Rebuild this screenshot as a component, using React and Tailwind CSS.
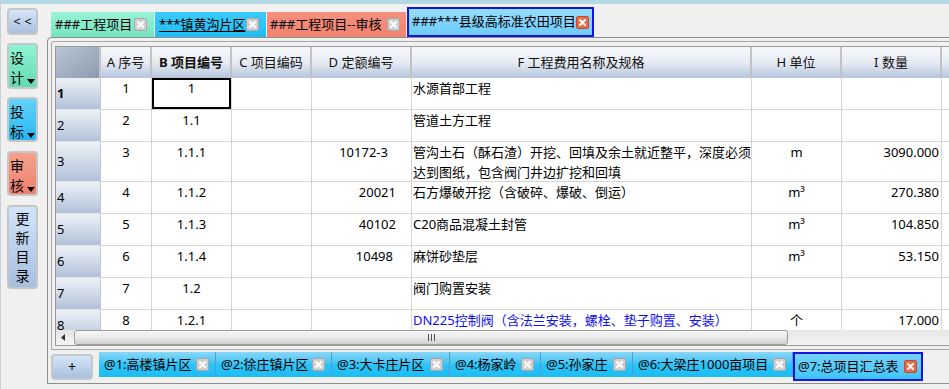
import React from "react";

const Close = ({ active }) => (
  <svg width="13" height="13" viewBox="0 0 13 13" className="shrink-0">
    <rect x="0.5" y="0.5" width="12" height="12" rx="1.5" fill={active ? "#ea6a4a" : "#d0d0d0"} stroke={active ? "#c2482e" : "#a6a6a6"} />
    <path d="M4 4 L9 9 M9 4 L4 9" stroke="#fff" strokeWidth="2" strokeLinecap="round" />
  </svg>
);

const Tri = () => (
  <svg width="8" height="5" viewBox="0 0 8 5" className="shrink-0 mb-[4px]">
    <polygon points="0,0 8,0 4,5" fill="#000" />
  </svg>
);

function Sidebar() {
  return (
    <div className="w-[45px] shrink-0 pl-[6px] pt-[4px] flex flex-col">
      <div className="w-[31px] h-[27px] rounded-[4px] border-2 border-[#c4c6c8] bg-gradient-to-b from-[#d6e5f8] to-[#a9c0df] flex items-center justify-center text-[13px] leading-none">
        &lt; &lt;
      </div>
      <div className="mt-[8px] w-[31px] h-[46px] rounded-[4px] border-2 border-[#c4c6c8] bg-gradient-to-b from-[#8ff5d4] to-[#64d9b2] pt-[3px] pl-[1px] pr-[1px] text-[14px] leading-[20px]">
        <div>设</div>
        <div className="flex items-end justify-between">计<Tri /></div>
      </div>
      <div className="mt-[8px] w-[31px] h-[45px] rounded-[4px] border-2 border-[#c4c6c8] bg-gradient-to-b from-[#62d2fa] to-[#1fb7f2] pt-[3px] pl-[1px] pr-[1px] text-[14px] leading-[20px]">
        <div>投</div>
        <div className="flex items-end justify-between">标<Tri /></div>
      </div>
      <div className="mt-[9px] w-[31px] h-[45px] rounded-[4px] border-2 border-[#c4c6c8] bg-gradient-to-b from-[#f4a28a] to-[#f07e6e] pt-[3px] pl-[1px] pr-[1px] text-[14px] leading-[20px]">
        <div>审</div>
        <div className="flex items-end justify-between">核<Tri /></div>
      </div>
      <div className="mt-[9px] w-[31px] h-[84px] rounded-[4px] border-2 border-[#c4c6c8] bg-gradient-to-b from-[#d2e4fb] to-[#a6bedd] pt-[2px] flex flex-col items-center text-[14px] leading-[19px]">
        <div>更</div>
        <div>新</div>
        <div>目</div>
        <div>录</div>
      </div>
    </div>
  );
}

function TopTabs() {
  return (
    <div className="h-[33px] shrink-0 flex items-end pl-[5px] gap-[1px]">
      <div className="w-[103px] h-[25px] flex items-center justify-between pl-[4px] pr-[7px] bg-gradient-to-b from-[#97f4d6] to-[#76e3bf] whitespace-nowrap">
        <span>###工程项目</span>
        <Close />
      </div>
      <div className="w-[111px] h-[25px] flex items-center justify-between pl-[4px] pr-[7px] bg-gradient-to-b from-[#3ccaf8] to-[#19bef5] whitespace-nowrap">
        <span className="underline underline-offset-2">***镇黄沟片区</span>
        <Close />
      </div>
      <div className="w-[139px] h-[25px] flex items-center justify-between pl-[3px] pr-[6px] bg-gradient-to-b from-[#f6907f] to-[#f2836f] whitespace-nowrap">
        <span>###工程项目--审核</span>
        <Close />
      </div>
      <div className="w-[187px] h-[30px] flex items-center justify-between pl-[3px] pr-[5px] border-2 border-[#1414e4] bg-gradient-to-b from-[#96ddff] to-[#6ccbfb] whitespace-nowrap">
        <span>###***县级高标准农田项目</span>
        <Close active />
      </div>
    </div>
  );
}

function HeadCell({ w, bold, children }) {
  return (
    <div className={`${w} shrink-0 flex items-center justify-center border-r-2 border-[#c2c2c2] bg-gradient-to-b from-[#f6f8fb] via-[#e6ebf3] to-[#b5c5dd] text-[#111] whitespace-nowrap ${bold ? "font-bold" : ""}`}>
      {children}
    </div>
  );
}

const rows = [
  { n: "1", a: "1", b: "1", d: "", dp: "", f: "水源首部工程", h: "", i: "", sel: true },
  { n: "2", a: "2", b: "1.1", d: "", dp: "", f: "管道土方工程", h: "", i: "" },
  {
    n: "3", a: "3", b: "1.1.1", d: "10172-3", dp: "pr-[23px]",
    f: (
      <>
        管沟土石（酥石渣）开挖、回填及余土就近整平，深度必须
        <br />
        达到图纸，包含阀门井边扩挖和回填
      </>
    ),
    h: "m", i: "3090.000", tall: true,
  },
  { n: "4", a: "4", b: "1.1.2", d: "20021", dp: "pr-[15px]", f: "石方爆破开挖（含破碎、爆破、倒运）", h: "m³", i: "270.380" },
  { n: "5", a: "5", b: "1.1.3", d: "40102", dp: "pr-[15px]", f: "C20商品混凝土封管", h: "m³", i: "104.850" },
  { n: "6", a: "6", b: "1.1.4", d: "10498", dp: "pr-[18px]", f: "麻饼砂垫层", h: "m³", i: "53.150" },
  { n: "7", a: "7", b: "1.2", d: "", dp: "", f: "阀门购置安装", h: "", i: "" },
  { n: "8", a: "8", b: "1.2.1", d: "", dp: "", f: "DN225控制阀（含法兰安装，螺栓、垫子购置、安装）", blue: true, h: "个", i: "17.000" },
];

const cell = "shrink-0 border-r border-b border-[#d6d6d6] bg-white leading-[20px] whitespace-nowrap overflow-hidden";

function Grid() {
  return (
    <div className="h-[300px] border border-[#9a9a9a] flex flex-col overflow-hidden bg-white">
      <div className="h-[283px] shrink-0 overflow-hidden flex flex-col">
        <div className="flex h-[31px] shrink-0">
          <div className="w-[45px] shrink-0 bg-gradient-to-br from-[#bac6d6] to-[#8c9bb0] border-r-2 border-[#c4c4c4]" />
          <HeadCell w="w-[51px]">A 序号</HeadCell>
          <HeadCell w="w-[80px]" bold>B 项目编号</HeadCell>
          <HeadCell w="w-[80px]">C 项目编码</HeadCell>
          <HeadCell w="w-[100px]">D 定额编号</HeadCell>
          <HeadCell w="w-[340px]">F 工程费用名称及规格</HeadCell>
          <HeadCell w="w-[90px]">H 单位</HeadCell>
          <HeadCell w="w-[100px]">I 数量</HeadCell>
          <HeadCell w="w-[100px]"></HeadCell>
        </div>
        {rows.map((r) => (
          <div key={r.n} className={`flex shrink-0 ${r.tall ? "h-[40px]" : "h-[32px]"}`}>
            <div className={`w-[45px] shrink-0 flex items-center pl-[1px] border-r border-b border-r-[#c6c6c6] border-b-[#dde2ea] bg-gradient-to-b from-[#eef1f6] to-[#b2c2da] ${r.sel ? "font-bold" : ""}`}>
              {r.n}
            </div>
            <div className={`${cell} w-[51px] text-center`}>{r.a}</div>
            <div className={`${cell} w-[80px] text-center relative`}>
              {r.b}
              {r.sel && <div className="absolute inset-0 border-2 border-black" />}
            </div>
            <div className={`${cell} w-[80px]`}></div>
            <div className={`${cell} w-[100px] text-right ${r.dp}`}>{r.d}</div>
            <div className={`${cell} w-[340px] pl-[1px] ${r.blue ? "text-[#1010f0]" : ""}`}>{r.f}</div>
            <div className={`${cell} w-[90px] text-center`}>{r.h}</div>
            <div className={`${cell} w-[100px] text-right pr-[2px]`}>{r.i}</div>
            <div className={`${cell} w-[100px]`}></div>
          </div>
        ))}
      </div>
      <div className="h-[15px] shrink-0 flex items-center bg-gradient-to-b from-[#e6e6e6] to-[#f4f4f4]">
        <div className="w-[18px] h-full flex items-center justify-center pr-[4px]">
          <svg width="4" height="7" viewBox="0 0 4 7">
            <polygon points="4,0 4,7 0,3.5" fill="#333" />
          </svg>
        </div>
        <div className="w-[714px] h-[15px] shrink-0 rounded-[3px] border border-[#9c9c9c] bg-gradient-to-b from-[#f8f8f8] via-[#e9e9e9] to-[#d0d0d0] flex items-center justify-center gap-[2px]">
          <div className="w-[1px] h-[7px] bg-[#555]" />
          <div className="w-[1px] h-[7px] bg-[#555]" />
          <div className="w-[1px] h-[7px] bg-[#555]" />
        </div>
      </div>
    </div>
  );
}

function BottomTab({ w, label, active }) {
  if (active) {
    return (
      <div className={`${w} h-[29px] shrink-0 flex items-center justify-between pl-[3px] pr-[4px] border-2 border-[#1414e4] bg-gradient-to-b from-[#72d3fa] to-[#3cc5f8] whitespace-nowrap`}>
        <span>{label}</span>
        <Close active />
      </div>
    );
  }
  return (
    <div className={`${w} h-[25px] shrink-0 flex items-center justify-between pl-[5px] pr-[6px] border-r border-[#4e9fca] bg-gradient-to-b from-[#88d7f8] via-[#2dc3f6] to-[#17bdf5] whitespace-nowrap`}>
      <span>{label}</span>
      <Close />
    </div>
  );
}

function Panel() {
  return (
    <div className="ml-[1px] w-[920px] h-[347px] border border-[#8e8e8e] rounded-tl-[4px] px-[3px] pt-[3px] flex flex-col bg-[#f0f0f0]">
      <div className="border border-[#a8a8a8] rounded-tl-[3px] pt-[4px] px-[3px] pb-[3px]">
        <Grid />
      </div>
      <div className="h-[32px] shrink-0 pt-[2px] flex items-start">
        <div className="w-[42px] h-[26px] mt-[2px] shrink-0 rounded-[4px] border-2 border-[#c6c9cc] bg-gradient-to-b from-[#d6e6f9] to-[#a9bfdd] flex items-center justify-center text-[14px] leading-none">
          +
        </div>
        <div className="ml-[6px] flex items-start">
          <BottomTab w="w-[117px]" label="@1:高楼镇片区" />
          <BottomTab w="w-[116px]" label="@2:徐庄镇片区" />
          <BottomTab w="w-[118px]" label="@3:大卡庄片区" />
          <BottomTab w="w-[91px]" label="@4:杨家岭" />
          <BottomTab w="w-[92px]" label="@5:孙家庄" />
          <BottomTab w="w-[160px]" label="@6:大梁庄1000亩项目" />
          <BottomTab w="w-[130px]" label="@7:总项目汇总表" active />
        </div>
      </div>
    </div>
  );
}

export default function App() {
  return (
    <div className="w-[949px] h-[389px] overflow-hidden bg-[#f0f0f0] text-black text-[13px] font-['Noto_Sans','Noto_Sans_CJK_SC',sans-serif] border-l border-[#c8d0d8]">
      <div className="h-[4px] bg-[#b3d9e2]" />
      <div className="flex h-[385px]">
        <Sidebar />
        <div className="flex-1 min-w-0 flex flex-col overflow-hidden">
          <TopTabs />
          <Panel />
        </div>
      </div>
    </div>
  );
}
